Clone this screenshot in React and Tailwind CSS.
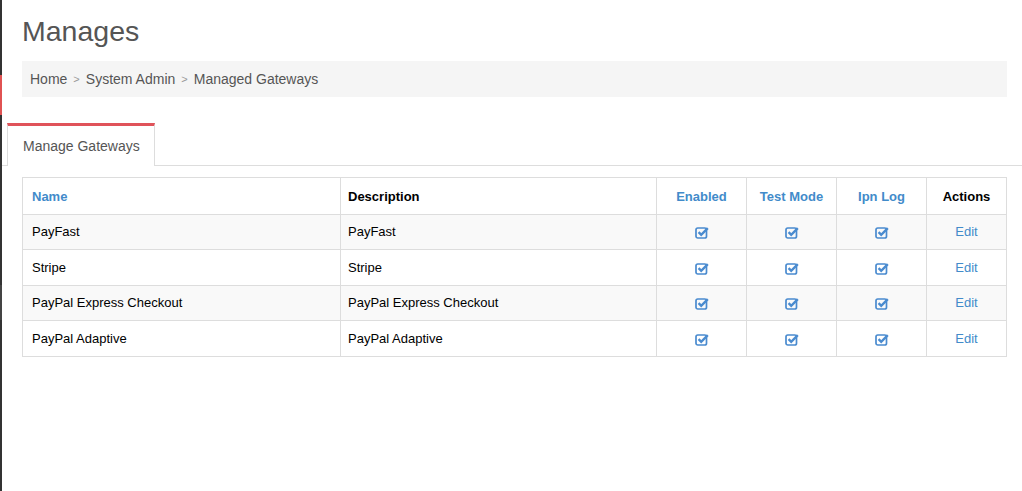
import React from "react";

function Check() {
  return (
    <svg width="14" height="13" viewBox="0 0 14 13" className="inline-block">
      <rect x="1" y="2" width="10.5" height="10" rx="1.8" fill="none" stroke="#4a8bcf" strokeWidth="1.7" />
      <path d="M3.6 6.2 L6.2 8.8 L12.8 2.2" fill="none" stroke="#4a8bcf" strokeWidth="2.4" />
    </svg>
  );
}

const rows = [
  ["PayFast", "PayFast"],
  ["Stripe", "Stripe"],
  ["PayPal Express Checkout", "PayPal Express Checkout"],
  ["PayPal Adaptive", "PayPal Adaptive"],
];

export default function App() {
  return (
    <div className="flex min-h-[491px] bg-white" style={{ fontFamily: '"Liberation Sans", Arial, sans-serif' }}>
      <div className="flex w-[2px] flex-col bg-[#333]">
        <div className="h-[75px]" />
        <div className="h-[40px] bg-[#e05252]" />
        <div className="h-[170px]" />
        <div className="h-[35px] bg-[#444]" />
      </div>
      <div className="flex-1">
        <div className="pl-[20px] pr-[15px]">
          <h1 className="pt-[13px] text-[28.5px] leading-[36px] text-[#555]">Manages</h1>
          <div className="mt-[12px] flex h-[36px] items-center bg-[#f5f5f5] px-[8px] text-[14px] text-[#555]">
            <span>Home</span>
            <span className="px-[6px] text-[11px] text-[#999]">&gt;</span>
            <span>System Admin</span>
            <span className="px-[6px] text-[11px] text-[#999]">&gt;</span>
            <span>Managed Gateways</span>
          </div>
        </div>
        <div className="mt-[26px] flex border-b border-[#ddd] pl-[5px]">
          <div className="-mb-px flex h-[43px] w-[148px] items-center border-t-[3px] border-x border-x-[#ddd] border-t-[#e0535a] bg-white pl-[15px] text-[14px] text-[#555]">
            Manage Gateways
          </div>
        </div>
        <div className="pl-[20px] pr-[15px] pt-[11px]">
          <table className="w-full border-collapse border border-[#ddd] text-[13px] text-[#000]">
            <thead>
              <tr className="h-[37px]">
                <th className="w-[318px] border border-[#ddd] px-[9px] pt-[2px] text-left font-bold text-[#428bca]">Name</th>
                <th className="w-[316px] border border-[#ddd] px-[7px] pt-[2px] text-left font-bold text-[#000]">Description</th>
                <th className="w-[90px] border border-[#ddd] pt-[2px] text-center font-bold text-[#428bca]">Enabled</th>
                <th className="w-[90px] border border-[#ddd] pt-[2px] text-center font-bold text-[#428bca]">Test Mode</th>
                <th className="w-[90px] border border-[#ddd] pt-[2px] text-center font-bold text-[#428bca]">Ipn Log</th>
                <th className="border border-[#ddd] pt-[2px] text-center font-bold text-[#000]">Actions</th>
              </tr>
            </thead>
            <tbody>
              {rows.map((r, i) => (
                <tr key={i} className={i % 2 === 0 ? "h-[35px] bg-[#f9f9f9]" : "h-[36px] bg-white"}>
                  <td className="border border-[#ddd] px-[9px]">{r[0]}</td>
                  <td className="border border-[#ddd] px-[7px]">{r[1]}</td>
                  <td className="border border-[#ddd] text-center"><Check /></td>
                  <td className="border border-[#ddd] text-center"><Check /></td>
                  <td className="border border-[#ddd] text-center"><Check /></td>
                  <td className="border border-[#ddd] text-center text-[#428bca]">Edit</td>
                </tr>
              ))}
            </tbody>
          </table>
        </div>
      </div>
    </div>
  );
}
